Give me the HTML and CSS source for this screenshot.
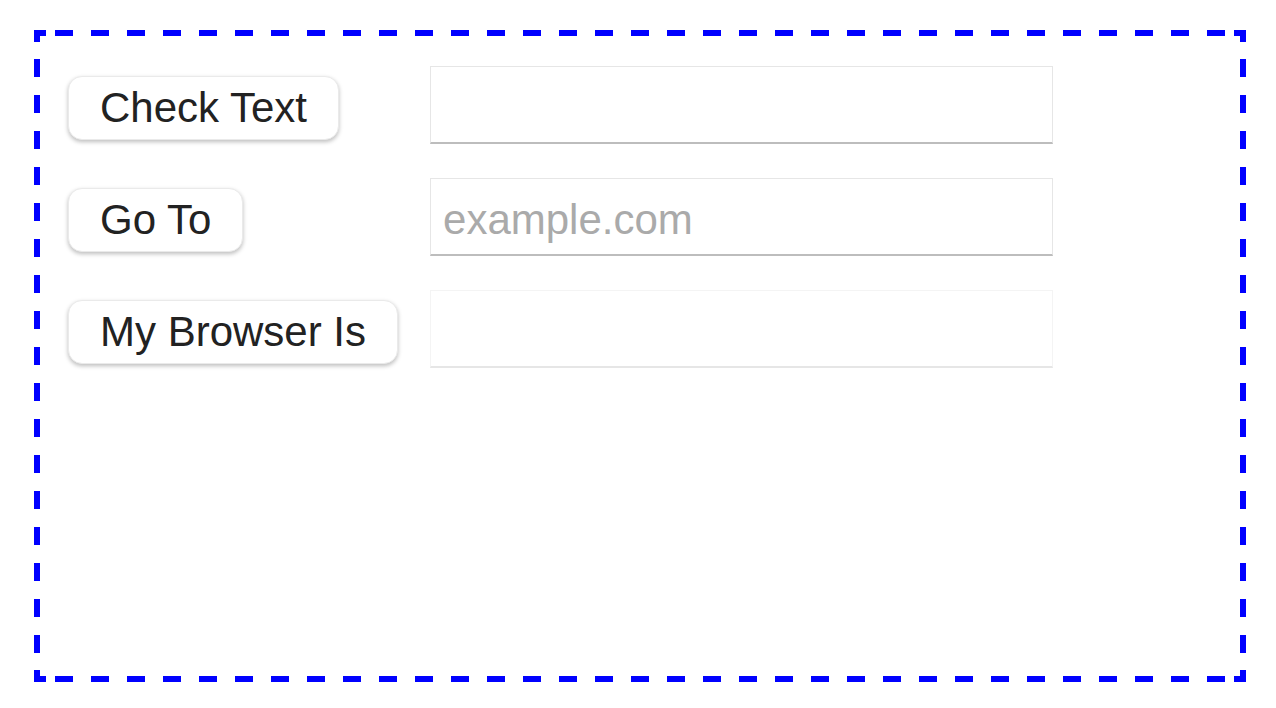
FILE: index.html
```
<!DOCTYPE html>
<html lang="en">
<head>
<meta charset="utf-8">
<title>Form</title>
<link rel="stylesheet" href="styles.css">
</head>
<body>
<div class="page">
  <div class="frame">
    <div class="grid">
      <button class="btn" type="button">Check Text</button>
      <input class="field" type="text">
      <button class="btn" type="button">Go To</button>
      <input class="field" type="text" placeholder="example.com">
      <button class="btn" type="button">My Browser Is</button>
      <input class="field field-disabled" type="text" disabled>
    </div>
  </div>
</div>
</body>
</html>
```
FILE: styles.css
```
html, body {
  margin: 0;
  padding: 0;
  background: #fff;
  font-family: "Liberation Sans", Arial, Helvetica, sans-serif;
}
.page {
  padding: 30px 30px 0 34px;
}
.frame {
  --c: #0000ff;
  box-sizing: border-box;
  width: 1212px;
  height: 652px;
  border: 6px solid transparent;
  padding: 30px 0 0 28px;
  background-origin: border-box;
  background-clip: border-box;
  background-repeat: no-repeat;
  background-image:
    repeating-linear-gradient(90deg, var(--c) 0 18px, transparent 18px 36px),
    repeating-linear-gradient(90deg, var(--c) 0 18px, transparent 18px 36px),
    repeating-linear-gradient(180deg, var(--c) 0 18px, transparent 18px 36px),
    repeating-linear-gradient(180deg, var(--c) 0 18px, transparent 18px 36px),
    linear-gradient(var(--c), var(--c)),
    linear-gradient(var(--c), var(--c)),
    linear-gradient(var(--c), var(--c)),
    linear-gradient(var(--c), var(--c)),
    linear-gradient(var(--c), var(--c)),
    linear-gradient(var(--c), var(--c)),
    linear-gradient(var(--c), var(--c)),
    linear-gradient(var(--c), var(--c));
  background-size:
    1170px 6px,
    1170px 6px,
    6px 594px,
    6px 594px,
    12px 6px, 12px 6px, 12px 6px, 12px 6px,
    6px 12px, 6px 12px, 6px 12px, 6px 12px;
  background-position:
    21px 0,
    21px 100%,
    0 29px,
    100% 29px,
    0 0, 100% 0, 0 100%, 100% 100%,
    0 0, 100% 0, 0 100%, 100% 100%;
}
.grid {
  display: grid;
  grid-template-columns: auto 623px;
  column-gap: 32px;
  row-gap: 34px;
  align-items: baseline;
  justify-content: start;
}
.btn {
  justify-self: start;
  font-family: "Liberation Sans", Arial, Helvetica, sans-serif;
  font-size: 42px;
  line-height: 48px;
  color: #222;
  background: #fff;
  border: 1px solid #eaeaea;
  border-radius: 14px;
  padding: 7px 31px;
  box-shadow: 0 2px 4px rgba(0, 0, 0, 0.26);
  margin: 0;
}
.field {
  box-sizing: border-box;
  width: 623px;
  height: 78px;
  margin: 0;
  font-family: "Liberation Sans", Arial, Helvetica, sans-serif;
  font-size: 42px;
  line-height: 48px;
  color: #222;
  background: #fff;
  padding: 17px 12px 10px;
  border: 1px solid #e6e6e6;
  border-bottom: 2px solid #bdbdbd;
  border-radius: 0;
  outline: none;
}
.field::placeholder {
  color: #aaa;
}
.field-disabled {
  border-color: #f4f4f4;
  border-bottom-color: #e6e6e6;
}
```
